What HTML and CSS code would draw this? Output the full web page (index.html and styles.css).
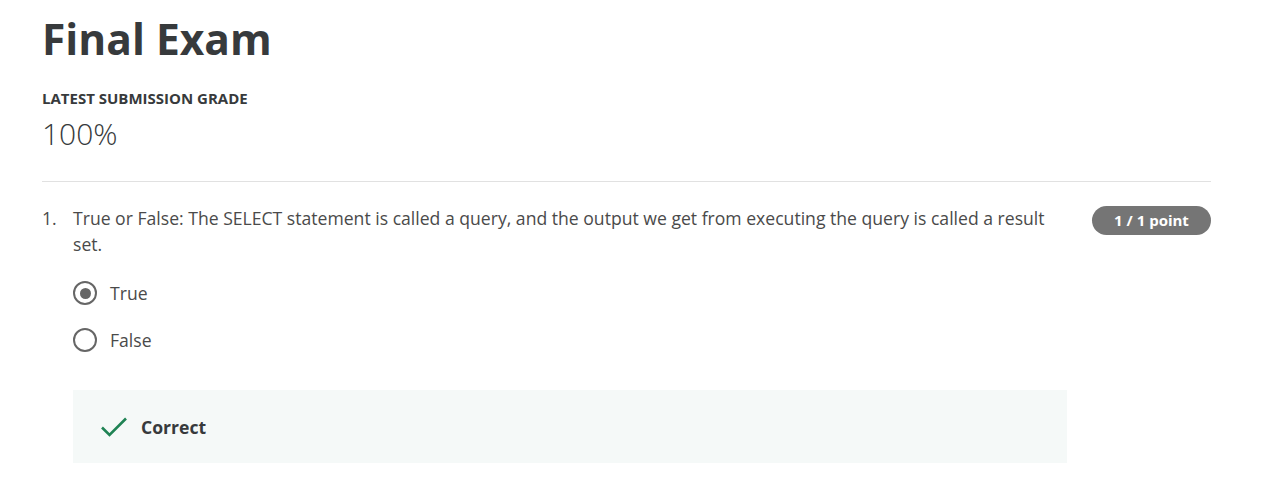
FILE: index.html
```html
<!DOCTYPE html>
<html>
<head>
<meta charset="utf-8">
<link rel="stylesheet" href="styles.css">
</head>
<body>
<main class="page">
  <h1 class="title">Final Exam</h1>
  <div class="grade-label">LATEST SUBMISSION GRADE</div>
  <div class="grade-value">100%</div>
  <hr class="divider">
  <section class="question">
    <div class="q-head">
      <div class="q-num">1.</div>
      <div class="q-text">True or False: The SELECT statement is called a query, and the output we get from executing the query is called a result set.</div>
      <div class="badge">1 / 1 point</div>
    </div>
    <div class="options">
      <div class="option"><span class="radio checked"></span><span class="opt-label">True</span></div>
      <div class="option"><span class="radio"></span><span class="opt-label">False</span></div>
    </div>
    <div class="feedback">
      <svg class="check" width="28" height="22" viewBox="0 0 28 22"><path d="M2 11.5 L9.5 19 L26 2.5" fill="none" stroke="#1f8354" stroke-width="2.6"/></svg>
      <span class="fb-text">Correct</span>
    </div>
  </section>
</main>
</body>
</html>
```
FILE: styles.css
```css
* { box-sizing: border-box; }
body {
  margin: 0;
  font-family: "Open Sans", "Noto Sans", sans-serif;
  color: #373a3c;
  background: #fff;
}
.page {
  padding: 11px 50px 0 42px;
}
.title {
  margin: 0;
  font-size: 42.5px;
  font-weight: 700;
  line-height: 56px;
  color: #373a3c;
}
.grade-label {
  margin-top: 21px;
  font-size: 15px;
  font-weight: 700;
  line-height: 20px;
  color: #373a3c;
}
.grade-value {
  margin-top: 8px;
  font-size: 30px;
  font-weight: 300;
  line-height: 36px;
  color: #373a3c;
}
.divider {
  margin: 29px 0 0 0;
  border: 0;
  border-top: 1px solid #e1e1e1;
}
.question {
  padding-top: 23px;
}
.q-head {
  display: flex;
  align-items: flex-start;
}
.q-num {
  width: 31px;
  flex: none;
  font-size: 17.6px;
  line-height: 26px;
  color: #4a4a4a;
}
.q-text {
  width: 980px;
  flex: none;
  font-size: 17.6px;
  line-height: 26px;
  color: #4a4a4a;
}
.badge {
  margin-left: auto;
  margin-top: 1px;
  width: 119px;
  height: 29px;
  border-radius: 15px;
  background: #757575;
  color: #fff;
  font-size: 15px;
  font-weight: 700;
  line-height: 29px;
  text-align: center;
}
.options {
  margin-left: 31px;
  margin-top: 23px;
  display: flex;
  flex-direction: column;
  gap: 21px;
}
.option {
  display: flex;
  align-items: center;
  height: 26px;
}
.radio {
  width: 24px;
  height: 24px;
  border: 2.5px solid #666;
  border-radius: 50%;
  margin-right: 13px;
  display: flex;
  align-items: center;
  justify-content: center;
}
.radio.checked::after {
  content: "";
  width: 11px;
  height: 11px;
  border-radius: 50%;
  background: #666;
}
.opt-label {
  font-size: 17.6px;
  line-height: 26px;
  color: #4a4a4a;
}
.feedback {
  margin-left: 31px;
  margin-top: 37px;
  width: 994px;
  height: 73px;
  background: #f5f9f8;
  display: flex;
  align-items: center;
  padding-left: 27px;
}
.check { margin-right: 13px; }
.fb-text {
  font-size: 17.6px;
  font-weight: 700;
  color: #373a3c;
}
```
